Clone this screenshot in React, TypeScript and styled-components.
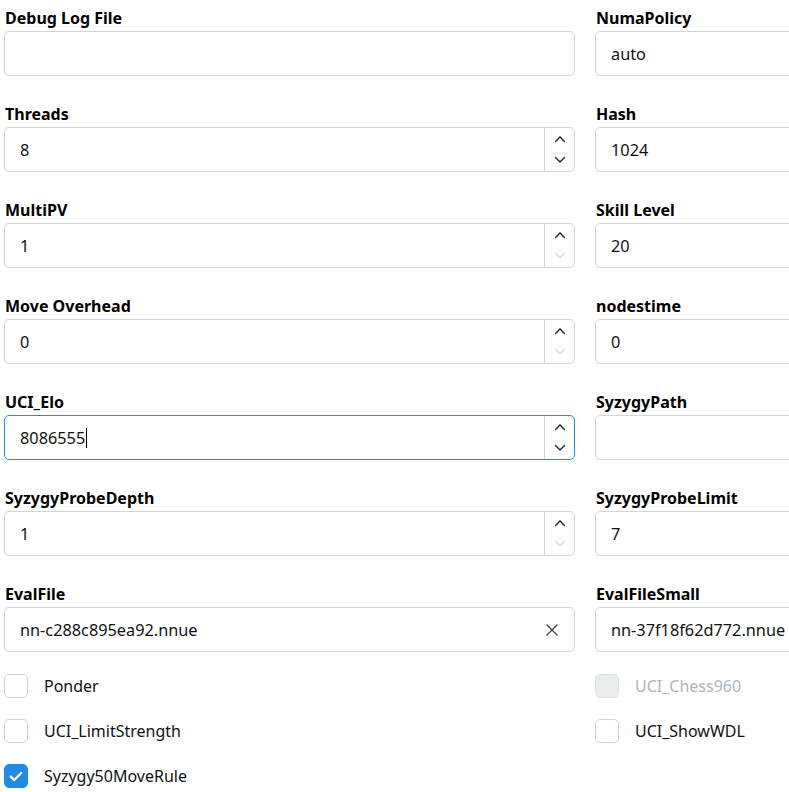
import React from "react";
import styled, { createGlobalStyle, css } from "styled-components";

const GlobalStyle = createGlobalStyle`
  html, body {
    margin: 0;
    padding: 0;
    background: #ffffff;
    overflow: hidden;
  }
  body {
    font-family: "Noto Sans", "Open Sans", Arial, sans-serif;
    color: #000000;
  }
`;

type Option =
  | { name: string; kind: "text"; value: string; clearable?: boolean; focused?: boolean }
  | { name: string; kind: "spin"; value: string; atMin?: boolean; focused?: boolean };

type Toggle = { name: string; checked?: boolean; disabled?: boolean };

const rows: [Option, Option][] = [
  [
    { name: "Debug Log File", kind: "text", value: "" },
    { name: "NumaPolicy", kind: "text", value: "auto" },
  ],
  [
    { name: "Threads", kind: "spin", value: "8" },
    { name: "Hash", kind: "spin", value: "1024" },
  ],
  [
    { name: "MultiPV", kind: "spin", value: "1", atMin: true },
    { name: "Skill Level", kind: "spin", value: "20" },
  ],
  [
    { name: "Move Overhead", kind: "spin", value: "0", atMin: true },
    { name: "nodestime", kind: "spin", value: "0", atMin: true },
  ],
  [
    { name: "UCI_Elo", kind: "spin", value: "8086555", focused: true },
    { name: "SyzygyPath", kind: "text", value: "" },
  ],
  [
    { name: "SyzygyProbeDepth", kind: "spin", value: "1", atMin: true },
    { name: "SyzygyProbeLimit", kind: "spin", value: "7" },
  ],
  [
    { name: "EvalFile", kind: "text", value: "nn-c288c895ea92.nnue", clearable: true },
    { name: "EvalFileSmall", kind: "text", value: "nn-37f18f62d772.nnue", clearable: true },
  ],
];

const toggles: Toggle[] = [
  { name: "Ponder" },
  { name: "UCI_Chess960", disabled: true },
  { name: "UCI_LimitStrength" },
  { name: "UCI_ShowWDL" },
  { name: "Syzygy50MoveRule", checked: true },
];

const Chevron = ({ up, dim }: { up?: boolean; dim?: boolean }) => (
  <svg width="12" height="8" viewBox="0 0 12 8" fill="none">
    <path
      d={up ? "M1.5 6.5 L6 2 L10.5 6.5" : "M1.5 1.5 L6 6 L10.5 1.5"}
      stroke={dim ? "#d2d6db" : "#222"}
      strokeWidth="1.4"
      strokeLinecap="round"
      strokeLinejoin="round"
    />
  </svg>
);

const ClearIcon = () => (
  <svg width="12" height="12" viewBox="0 0 12 12" fill="none">
    <path d="M1 1 L11 11 M11 1 L1 11" stroke="#444" strokeWidth="1.4" strokeLinecap="round" />
  </svg>
);

const CheckMark = () => (
  <svg width="14" height="11" viewBox="0 0 14 11" fill="none">
    <path d="M1.8 5.6 L5.3 9 L12.2 2" stroke="#fff" strokeWidth="2.4" strokeLinecap="round" strokeLinejoin="round" />
  </svg>
);

const Field = ({ opt }: { opt: Option }) => (
  <FieldWrap>
    <Label>{opt.name}</Label>
    <Box $focused={!!opt.focused}>
      <Value>
        {opt.value}
        {opt.focused && <Caret />}
      </Value>
      {opt.kind === "spin" && (
        <Spinner>
          <SpinButton>
            <Chevron up />
          </SpinButton>
          <SpinButton>
            <Chevron dim={opt.atMin} />
          </SpinButton>
        </Spinner>
      )}
      {opt.kind === "text" && opt.clearable && (
        <ClearButton>
          <ClearIcon />
        </ClearButton>
      )}
    </Box>
  </FieldWrap>
);

export default function App() {
  return (
    <>
      <GlobalStyle />
      <Page>
        <Grid>
          {rows.map(([left, right]) => (
            <React.Fragment key={left.name}>
              <Field opt={left} />
              <Field opt={right} />
            </React.Fragment>
          ))}
        </Grid>
        <CheckGrid>
          {toggles.map((t) => (
            <CheckRow key={t.name} $disabled={!!t.disabled}>
              <CheckBox $checked={!!t.checked} $disabled={!!t.disabled}>
                {t.checked && <CheckMark />}
              </CheckBox>
              <span>{t.name}</span>
            </CheckRow>
          ))}
        </CheckGrid>
      </Page>
    </>
  );
}

const Page = styled.div`
  width: 1170px;
  padding: 6px 0 0 4px;
`;

const Grid = styled.div`
  display: grid;
  grid-template-columns: 571px 571px;
  column-gap: 20px;
  row-gap: 26px;
`;

const FieldWrap = styled.div`
  display: flex;
  flex-direction: column;
  gap: 1px;
`;

const Label = styled.label`
  font-size: 16px;
  line-height: 24px;
  font-weight: 700;
  padding-left: 1px;
`;

const Box = styled.div<{ $focused: boolean }>`
  height: 45px;
  box-sizing: border-box;
  display: flex;
  align-items: stretch;
  border: 1px solid #ced4da;
  border-radius: 5px;
  background: #fff;
  ${(p) =>
    p.$focused &&
    css`
      border-color: #228be6;
    `}
`;

const Value = styled.div`
  flex: 1;
  display: flex;
  align-items: center;
  padding-left: 15px;
  font-size: 16.3px;
  color: #111;
`;

const Caret = styled.span`
  display: inline-block;
  width: 1px;
  height: 20px;
  background: #000;
  margin-left: 1px;
`;

const Spinner = styled.div`
  width: 29px;
  display: flex;
  flex-direction: column;
  border-left: 1px solid #ced4da;
`;

const SpinButton = styled.div`
  flex: 1;
  display: flex;
  align-items: center;
  justify-content: center;
`;

const ClearButton = styled.div`
  width: 44px;
  display: flex;
  align-items: center;
  justify-content: center;
`;

const CheckGrid = styled.div`
  display: grid;
  grid-template-columns: 571px 571px;
  column-gap: 20px;
  row-gap: 21px;
  margin-top: 22px;
`;

const CheckRow = styled.div<{ $disabled: boolean }>`
  display: flex;
  align-items: center;
  gap: 16px;
  font-size: 16px;
  line-height: 24px;
  color: ${(p) => (p.$disabled ? "#adb5bd" : "#111")};
`;

const CheckBox = styled.div<{ $checked: boolean; $disabled: boolean }>`
  width: 24px;
  height: 24px;
  box-sizing: border-box;
  border-radius: 5px;
  display: flex;
  align-items: center;
  justify-content: center;
  border: 1px solid #ced4da;
  background: #fff;
  ${(p) =>
    p.$checked &&
    css`
      background: #228be6;
      border-color: #228be6;
    `}
  ${(p) =>
    p.$disabled &&
    css`
      background: #e9ecef;
      border-color: #dee2e6;
    `}
`;
